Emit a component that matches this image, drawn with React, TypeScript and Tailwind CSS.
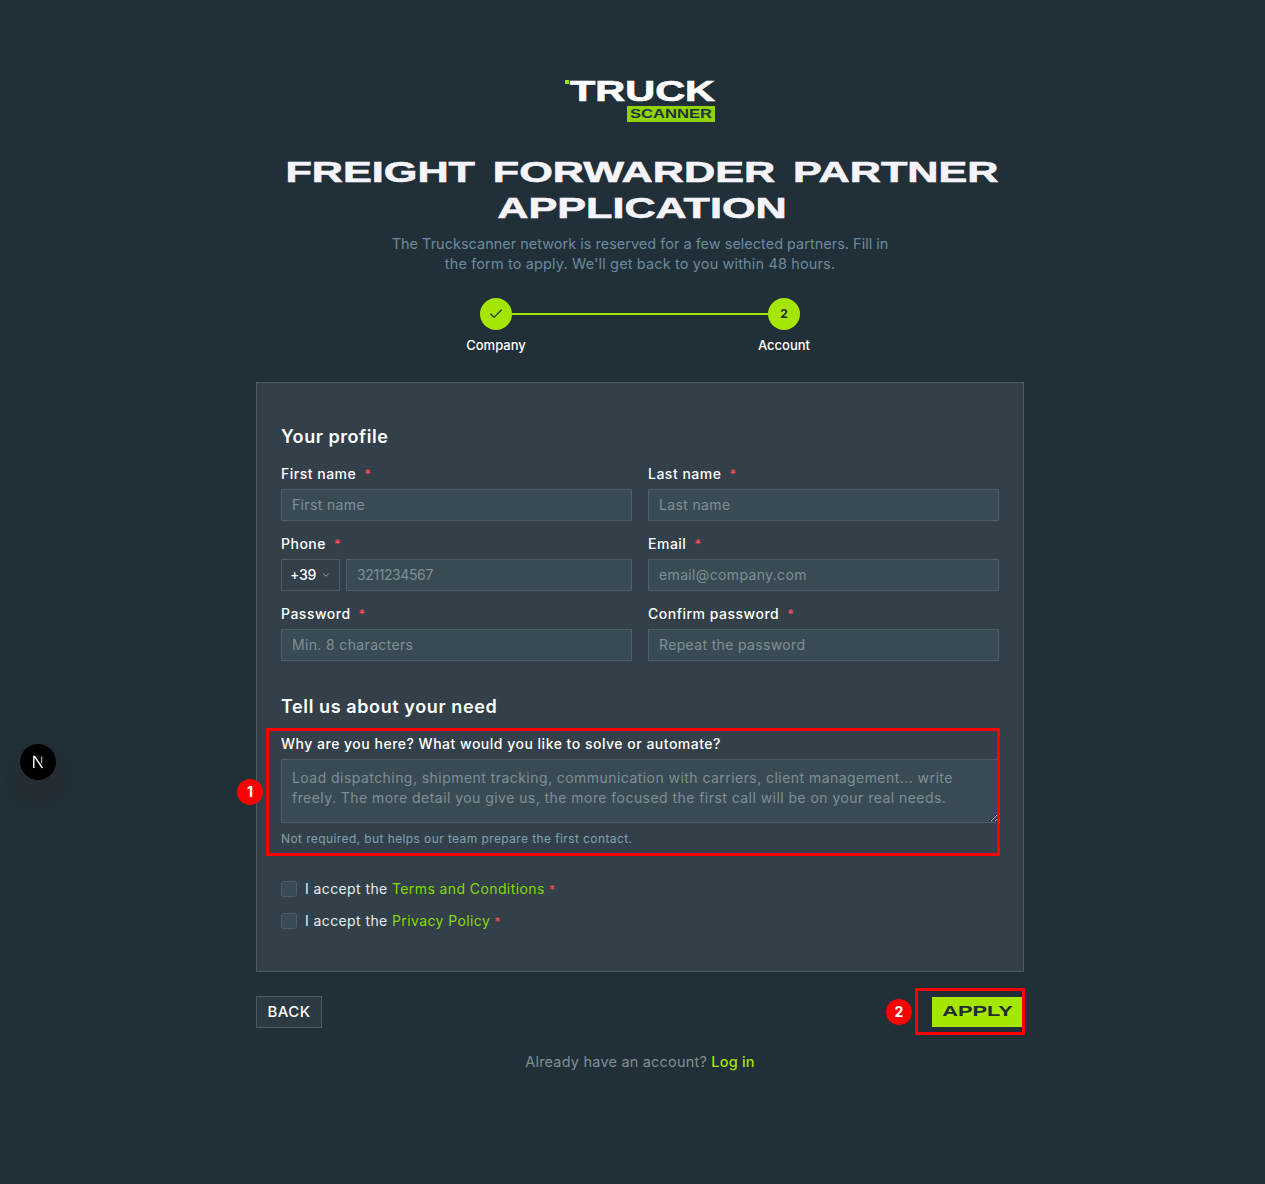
import { Check, ChevronDown } from "lucide-react";

type FieldProps = {
  label: string;
  placeholder: string;
};

function FieldLabel({ label }: { label: string }) {
  return (
    <label className="flex h-5 items-center text-[14px] font-medium tracking-[0.5px] text-white">
      {label}
      <span className="ml-2 translate-y-[1px] text-[13px] text-[#ff4d57]">*</span>
    </label>
  );
}

function Field({ label, placeholder }: FieldProps) {
  return (
    <div className="flex flex-col gap-[5px]">
      <FieldLabel label={label} />
      <input
        placeholder={placeholder}
        className="h-8 w-full border border-[#4c5c68] bg-[#3a4a54] px-[10px] text-[14px] tracking-[0.35px] text-white outline-none placeholder:text-[#7d9094]"
      />
    </div>
  );
}

function PhoneField() {
  return (
    <div className="flex flex-col gap-[5px]">
      <FieldLabel label="Phone" />
      <div className="flex gap-[6px]">
        <button className="flex h-8 w-[59px] shrink-0 items-center gap-[5px] border border-[#4c5c68] bg-[#33404a] pl-[8px] text-[14px] font-medium tracking-[-0.3px] text-white">
          +39
          <ChevronDown size={10} className="text-[#9aa8b0]" />
        </button>
        <input
          placeholder="3211234567"
          className="h-8 w-full border border-[#4c5c68] bg-[#3a4a54] px-[10px] text-[14px] tracking-[-0.4px] text-white outline-none placeholder:text-[#7d9094]"
        />
      </div>
    </div>
  );
}

function Consent({ link }: { link: string }) {
  return (
    <label className="flex h-4 items-center gap-2 text-[14px] tracking-[0.4px] text-[#e6edf2]">
      <span className="size-4 rounded-[3px] border border-[#4c5c68] bg-[#3a4a54]" />
      <span>
        I accept the <span className="text-[#86d900]">{link}</span>{" "}
        <span className="text-[12px] text-[#ff4d57]">*</span>
      </span>
    </label>
  );
}

function Marker({ n }: { n: number }) {
  return (
    <span className="flex size-[26px] items-center justify-center rounded-full bg-[#ff0000] text-[14px] font-bold text-white">
      {n}
    </span>
  );
}

function Logo() {
  return (
    <svg width="152" height="50" viewBox="0 -4 152 50" className="block" aria-label="Truck Scanner">
      <rect x="1" y="3" width="4" height="4" fill="#a4e600" />
      <text
        x="6"
        y="24"
        textLength="145"
        lengthAdjust="spacingAndGlyphs"
        fontFamily="Liberation Sans"
        fontWeight="700"
        fontSize="29"
        fill="#ffffff"
        stroke="#ffffff"
        strokeWidth="0.7"
      >
        TRUCK
      </text>
      <rect x="63" y="29" width="88" height="16" fill="#8fd400" />
      <text
        x="66"
        y="41"
        textLength="82"
        lengthAdjust="spacingAndGlyphs"
        fontFamily="Liberation Sans"
        fontWeight="700"
        fontSize="13"
        fill="#22303a"
      >
        SCANNER
      </text>
    </svg>
  );
}

export default function App() {
  return (
    <div className="relative min-h-[1184px] bg-[#212f38] pt-[73px] pl-[15px] font-['Inter',sans-serif]">
      <div className="flex justify-center">
        <Logo />
      </div>

      <h1 className="mx-auto mt-[31px] w-[520px] translate-x-[2px] scale-x-[1.44] text-center font-['Liberation_Sans',sans-serif] text-[30px] leading-[36px] font-bold text-[#f6f4fb] [-webkit-text-stroke:0.6px_#f6f4fb] [word-spacing:4px]">
        FREIGHT FORWARDER PARTNER
        <br />
        APPLICATION
      </h1>

      <p className="mt-[8px] text-center text-[14.5px] leading-[20px] text-[#6c8a9e]">
        The Truckscanner network is reserved for a few selected partners. Fill in
        <br />
        <span className="tracking-[0.14px]">the form to apply. We'll get back to you within 48 hours.</span>
      </p>

      <div className="mt-[24px] flex justify-center">
        <div className="flex w-[80px] flex-col items-center">
          <span className="flex size-8 items-center justify-center rounded-full bg-[#a4e600]">
            <Check size={16} strokeWidth={1.75} className="text-[#1f2a32]" />
          </span>
          <span className="mt-[6px] text-[13px] font-medium text-white">Company</span>
        </div>
        <div className="-mx-6 mt-[15px] h-[2px] w-[256px] bg-[#a4e600]" />
        <div className="flex w-[80px] flex-col items-center">
          <span className="flex size-8 items-center justify-center rounded-full bg-[#a4e600] text-[12px] font-bold text-[#1f2a32]">
            2
          </span>
          <span className="mt-[6px] text-[13px] font-medium text-white">Account</span>
        </div>
      </div>

      <div className="mx-auto mt-[26px] w-[768px]">
        <form className="border border-[#4c5a66] bg-[#33404a] px-6 pt-10 pb-[42px]">
          <h2 className="text-[18px] leading-[28px] font-semibold tracking-[0.55px] text-white">
            Your profile
          </h2>
          <div className="mt-[13px] grid grid-cols-2 gap-x-4 gap-y-[13px]">
            <Field label="First name" placeholder="First name" />
            <Field label="Last name" placeholder="Last name" />
            <PhoneField />
            <Field label="Email" placeholder="email@company.com" />
            <Field label="Password" placeholder="Min. 8 characters" />
            <Field label="Confirm password" placeholder="Repeat the password" />
          </div>

          <h2 className="mt-8 text-[18px] leading-[28px] font-semibold tracking-[0.6px] text-white">
            Tell us about your need
          </h2>
          <div className="relative mt-[13px]">
            <label className="flex h-5 items-center text-[14px] font-medium tracking-[0.5px] text-white">
              Why are you here? What would you like to solve or automate?
            </label>
            <textarea
              placeholder="Load dispatching, shipment tracking, communication with carriers, client management... write freely. The more detail you give us, the more focused the first call will be on your real needs."
              className="mt-[5px] block h-16 w-full border border-[#4c5c68] bg-[#3a4a54] px-[10px] py-[8px] text-[14px] leading-[20px] tracking-[0.45px] text-white outline-none placeholder:text-[#7d9094]"
            />
            <p className="mt-2 text-[12px] leading-4 tracking-[0.4px] text-[#80a0b0]">
              Not required, but helps our team prepare the first contact.
            </p>
            <div className="absolute -top-[6px] -right-[1px] -bottom-[9px] -left-[15px] border-[3px] border-[#ff0000]" />
            <div className="absolute top-[45px] -left-[44px]">
              <Marker n={1} />
            </div>
          </div>

          <div className="mt-[34px] flex flex-col gap-4">
            <Consent link="Terms and Conditions" />
            <Consent link="Privacy Policy" />
          </div>
        </form>

        <div className="mt-6 flex justify-between">
          <button className="h-8 w-[66px] border border-[#4c5a66] bg-[#2b3943] pt-px text-[15px] font-medium tracking-[0.5px] text-white">
            BACK
          </button>
          <div className="relative">
            <button className="h-8 w-[92px] border-y border-transparent bg-[#a4e600] bg-clip-padding pt-px font-['Liberation_Sans',sans-serif] text-[14.5px] font-bold text-[#1f2a32]">
              <span className="inline-block scale-x-[1.5]">APPLY</span>
            </button>
            <div className="absolute -top-2 -right-[1px] -bottom-[7px] -left-[17px] border-[3px] border-[#ff0000]" />
            <div className="absolute top-[3px] -left-[46px]">
              <Marker n={2} />
            </div>
          </div>
        </div>

        <p className="mt-6 text-center text-[14.5px] leading-5 tracking-[0.2px] text-[#7d9094]">
          Already have an account?{" "}
          <span className="font-medium text-[#a4e600]">Log in</span>
        </p>
      </div>

      <div className="fixed top-[744px] left-5 flex size-9 items-center justify-center rounded-full bg-black shadow-[0_0_0_1px_#2a2f33,0_16px_6px_8px_rgba(38,46,51,0.9)]">
        <svg width="16" height="16" viewBox="0 0 16 16" fill="none" aria-label="Next.js">
          <path d="M3.8 14V2.5h.9L12.4 14" stroke="#ffffff" strokeWidth="1.4" />
          <path d="M11.6 2.5v7" stroke="#a5a5a5" strokeWidth="1.4" />
        </svg>
      </div>
    </div>
  );
}
